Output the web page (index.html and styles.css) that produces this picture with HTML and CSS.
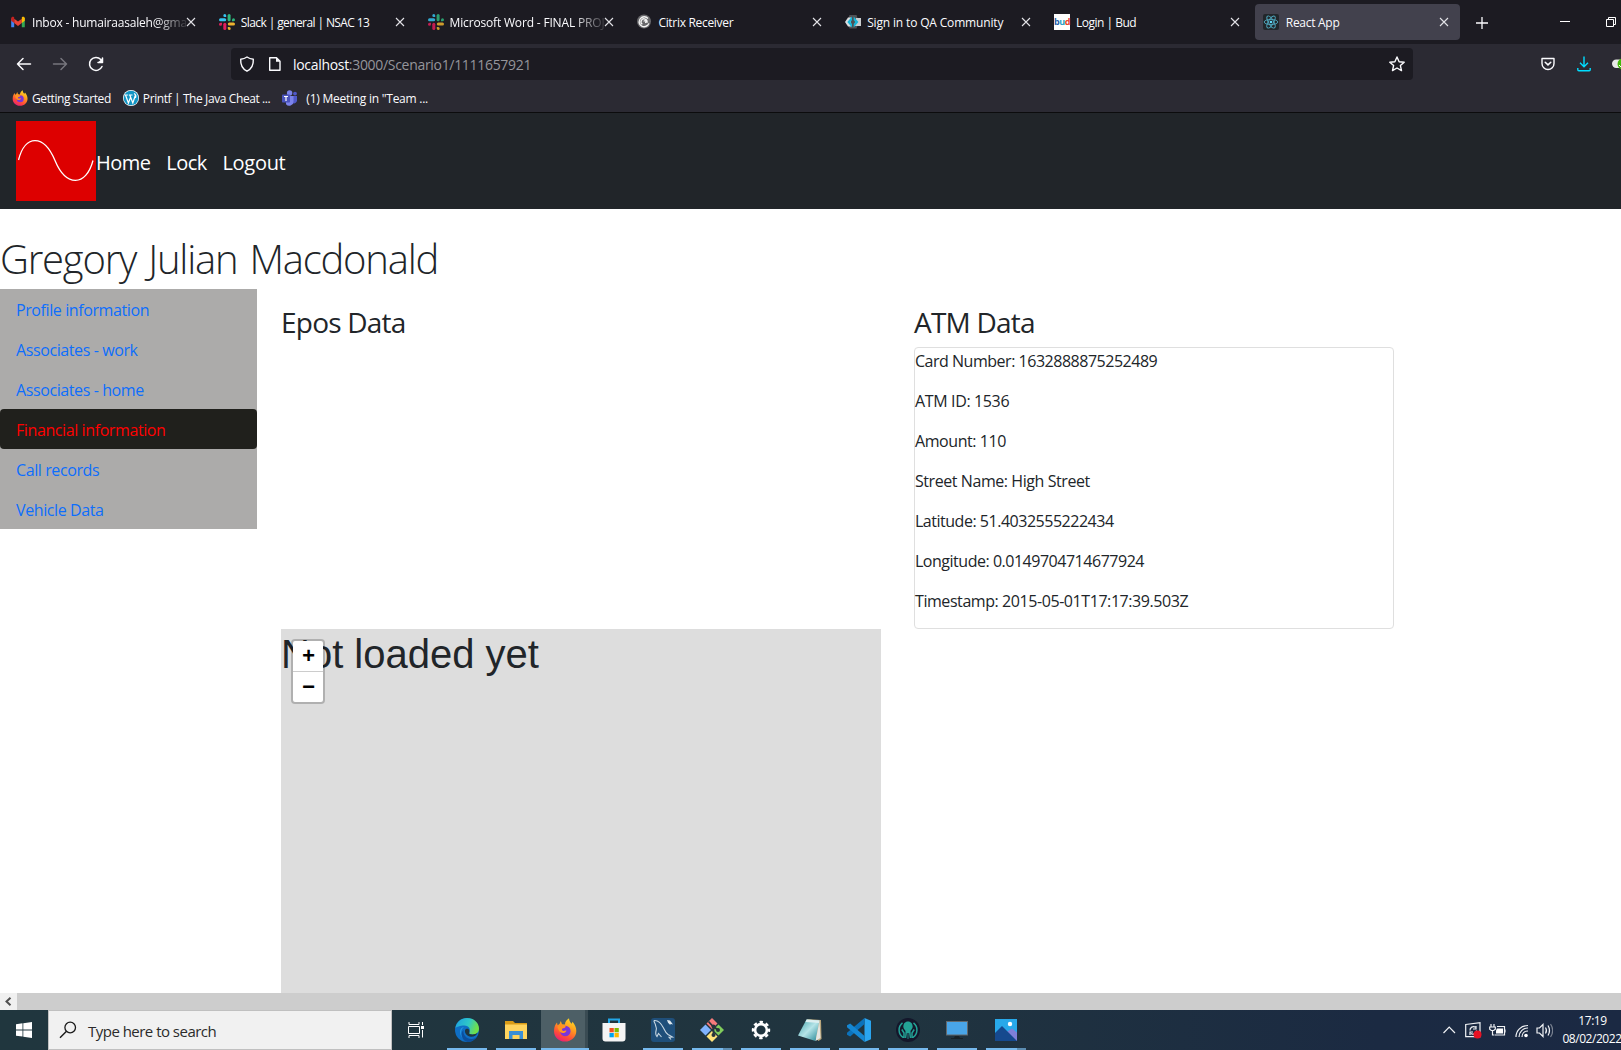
FILE: index.html
```html
<!DOCTYPE html>
<html lang="en">
<head>
<meta charset="utf-8">
<title>React App</title>
<link rel="stylesheet" href="styles.css">
</head>
<body>
<svg class="defs" width="0" height="0" aria-hidden="true">
  <defs>
    <linearGradient id="ffBody" x1="0.8" y1="0" x2="0.3" y2="1"><stop offset="0" stop-color="#ffe226"/><stop offset="0.4" stop-color="#ff9a1f"/><stop offset="0.75" stop-color="#ff4a3a"/><stop offset="1" stop-color="#e81e78"/></linearGradient>
    <linearGradient id="edgeTop" x1="0" y1="0" x2="1" y2="0.3"><stop offset="0" stop-color="#1c9fe0"/><stop offset="0.6" stop-color="#2fc8c8"/><stop offset="1" stop-color="#6fe04a"/></linearGradient>
    <linearGradient id="paper" x1="0" y1="0" x2="1" y2="1"><stop offset="0" stop-color="#3d9fa8"/><stop offset="0.5" stop-color="#b5e4e8"/><stop offset="1" stop-color="#1f8392"/></linearGradient>
    <symbol id="close" viewBox="0 0 10 10"><path d="M1 1l8 8M9 1l-8 8" stroke="#e3e3e8" stroke-width="1.1" fill="none"/></symbol>
    <symbol id="slack" viewBox="0 0 16 16">
      <g fill="#36c5f0"><rect x="0" y="4.3" width="7.2" height="3" rx="1.5"/><path d="M5.8 0a1.5 1.5 0 0 1 1.4 1.5V3H5.8a1.5 1.5 0 0 1 0-3z"/></g>
      <g fill="#2eb67d"><rect x="8.6" y="0" width="3" height="7.2" rx="1.5"/><path d="M16 5.8a1.5 1.5 0 0 1-1.5 1.5H13V5.8a1.5 1.5 0 0 1 3 0z"/></g>
      <g fill="#ecb22e"><rect x="8.8" y="8.6" width="7.2" height="3" rx="1.5"/><path d="M10.2 16a1.5 1.5 0 0 1-1.4-1.5V13h1.4a1.5 1.5 0 0 1 0 3z"/></g>
      <g fill="#e01e5a"><rect x="4.3" y="8.8" width="3" height="7.2" rx="1.5"/><path d="M0 10.2a1.5 1.5 0 0 1 1.5-1.5H3v1.5a1.5 1.5 0 0 1-3 0z"/></g>
    </symbol>
    <symbol id="firefox" viewBox="0 0 24 24">
      <path d="M12 23.6C5.600 23.600 1 18.900 1 13c0-3.700 1.500-7 3-8.400l.6 2.700 1.900-1.300 1.300-3 1.200 3.300 2.900.3C12 3.800 13.900 1.600 16 .3c.2 2.800 1.300 4 2.700 5.500l.8-2.100C22 6.500 23.300 9.700 23.300 13c0 6-4.900 10.600-11.300 10.600z" fill="url(#ffBody)"/>
      <circle cx="12.300" cy="13" r="5.300" fill="#7a35d8"/>
      <path d="M4.500 9c1.200-1.800 3.200-2.500 5.500-2l3 1.500c-.7 1.400-2.300 1.800-3.600 1.900-.8.700-.4 2.300.9 2.500 1 .2 1.900-.7 3.200-.2-.7 1.600-2 2.300-3.700 2.300-2.500-.1-4.700-2.700-5.300-6z" fill="#ff9322"/>
    </symbol>
  </defs>
</svg>

<header class="browser">
  <div class="tabstrip">
    <div class="tab">
      <svg class="fav" viewBox="0 0 16 16"><path d="M1.200 13.300V4.500l3 2.300v6.500z" fill="#4285f4"/><path d="M11.800 13.300V6.800l3-2.300v8.800z" fill="#34a853"/><path d="M4.200 9V4.700L8 7.600l3.800-2.900V9L8 11.900z" fill="#ea4335"/><path d="M1.200 6.800V4.300c0-1.500 1.700-2 2.700-1.200l.3.300V9z" fill="#c5221f"/><path d="M14.800 6.800V4.300c0-1.500-1.700-2-2.700-1.200l-.3.300V9z" fill="#fbbc04"/></svg>
      <span class="tab-title fade t0">Inbox - humairaasaleh@gmail.com</span><svg class="x"><use href="#close"/></svg>
    </div>
    <div class="tab"><svg class="fav"><use href="#slack"/></svg><span class="tab-title t1">Slack | general | NSAC 13</span><svg class="x"><use href="#close"/></svg></div>
    <div class="tab"><svg class="fav dim"><use href="#slack"/></svg><span class="tab-title fade t2">Microsoft Word - FINAL PROJECT</span><svg class="x"><use href="#close"/></svg></div>
    <div class="tab">
      <svg class="fav" viewBox="0 0 16 16"><circle cx="8" cy="7.500" r="7" fill="#68686b"/><path d="M8 7.600a1 1 0 1 1 1 1M6.300 10.300a3 3 0 1 1 4.600-1.600M12.900 9.400A5 5 0 1 1 12 4.500M3 7.500a5 5 0 0 0 8 4" fill="none" stroke="#f5f5f5" stroke-width="1.300"/></svg>
      <span class="tab-title t3">Citrix Receiver</span><svg class="x"><use href="#close"/></svg>
    </div>
    <div class="tab">
      <svg class="fav" viewBox="0 0 16 16"><path d="M4.500 1h7L14 8l-2.500 6.500h-7L2 8z" fill="#505054"/><path d="M0 8l3-4.500h3v9H3z" fill="#d9dde0"/><path d="M16 4h-5l-1 8h6z" fill="#c9cdd0"/><path d="M7 2.500L2.300 8 7 13.500V10L5.500 8 7 6zM8.700 2.500L13.400 8l-4.700 5.500V10l1.500-2-1.500-2z" fill="#17b5d8"/></svg>
      <span class="tab-title t4">Sign in to QA Community</span><svg class="x"><use href="#close"/></svg>
    </div>
    <div class="tab"><span class="fav bud"><i class="b">b</i><i class="u">u</i><i class="d">d</i></span><span class="tab-title t5">Login | Bud</span><svg class="x"><use href="#close"/></svg></div>
    <div class="tab active">
      <svg class="fav" viewBox="0 0 16 16"><rect width="16" height="16" rx="2" fill="#22272b"/><g fill="none" stroke="#4fa9c0" stroke-width=".9"><ellipse cx="8" cy="8" rx="6.800" ry="2.600"/><ellipse cx="8" cy="8" rx="6.800" ry="2.600" transform="rotate(60 8 8)"/><ellipse cx="8" cy="8" rx="6.800" ry="2.600" transform="rotate(120 8 8)"/></g><circle cx="8" cy="8" r="1.300" fill="#61dafb"/></svg>
      <span class="tab-title t6">React App</span><svg class="x"><use href="#close"/></svg>
    </div>
    <svg class="newtab" viewBox="0 0 12 12"><path d="M6 0v12M0 6h12" stroke="#fbfbfe" stroke-width="1.300"/></svg>
    <svg class="winctl" viewBox="0 0 58 16"><path d="M0 7.500h10" stroke="#fff"/><path d="M46.500 5.500h7v7h-7zM48.500 5.500v-2h7v7h-2" fill="none" stroke="#fff"/></svg>
  </div>

  <div class="toolbar">
    <svg class="nav-icons" viewBox="0 0 90 18" fill="none" stroke-width="1.500" stroke-linecap="round" stroke-linejoin="round"><path d="M14.500 9H1.500M7 3.500L1.500 9 7 14.500" stroke="#fbfbfe"/><path d="M37.500 9h13M45 3.500L50.500 9 45 14.500" stroke="#77767e"/><path d="M86 11.500a6.500 6.500 0 1 1-1.200-7" stroke="#fbfbfe"/><path d="M86.500 3v4.500H82" stroke="#fbfbfe"/><path d="M86.500 3v4.500H82z" fill="#fbfbfe" stroke="none"/></svg>
    <div class="urlbar">
      <svg class="shield" viewBox="0 0 16 16"><path d="M8 1c2 1.400 4 2 6.300 2.300C14.600 8.500 12.500 13 8 15.200 3.500 13 1.400 8.500 1.700 3.300 4 3 6 2.400 8 1z" fill="none" stroke="#fbfbfe" stroke-width="1.400" stroke-linejoin="round"/></svg>
      <svg class="page" viewBox="0 0 14 16"><path d="M2.500 1.700h6L12 5.200v9.100H1.700V1.700z" fill="none" stroke="#fbfbfe" stroke-width="1.400" stroke-linejoin="round"/><path d="M8 1.500v4.200h4.200z" fill="#fbfbfe"/></svg>
      <span class="url"><b>localhost</b>:3000/Scenario1/1111657921</span>
      <svg class="star" viewBox="0 0 16 16"><path d="M8 1l2.100 4.700 5.100.5-3.800 3.400 1.100 5L8 12l-4.500 2.600 1.100-5L.8 6.200l5.100-.5z" fill="none" stroke="#fbfbfe" stroke-width="1.400" stroke-linejoin="round"/></svg>
    </div>
    <div class="tools">
      <svg class="pocket" viewBox="0 0 14 14"><path d="M1 1.500h12v5a6 6 0 0 1-12 0z" fill="none" stroke="#fbfbfe" stroke-width="1.400" stroke-linejoin="round"/><path d="M4.200 5.200L7 7.900l2.800-2.700" fill="none" stroke="#fbfbfe" stroke-width="1.500" stroke-linecap="round"/></svg>
      <svg class="download" viewBox="0 0 14 16"><path d="M7 .5v10M3 6.800l4 4 4-4M.8 12v1.800c0 .6.400 1 1 1h10.400c.6 0 1-.4 1-1V12" fill="none" stroke="#00ddff" stroke-width="1.400"/></svg>
      <svg class="ext" viewBox="0 0 9 12"><rect x="0" y="1.500" width="16" height="8.500" rx="4.200" fill="#e8e8e8"/><circle cx="11" cy="6" r="5.500" fill="#43b80b"/><path d="M7 7l2 2" stroke="#fff"/></svg>
    </div>
  </div>

  <div class="bookmarks">
    <svg class="fav" viewBox="0 0 24 24"><use href="#firefox"/></svg><span class="bm b0">Getting Started</span>
    <svg class="fav" viewBox="0 0 16 16"><circle cx="8" cy="8" r="8" fill="#fff"/><circle cx="8" cy="8" r="7.300" fill="#1295c4"/><path d="M2.500 5l2.900 8L7.700 7M6.800 5l3 8 2.500-7.500M1.700 5h3.200M5.800 5h3.700M11 3.500c1.800 1 2.300 2.500 1.400 4.500" fill="none" stroke="#fff" stroke-width="1.200"/></svg><span class="bm b1">Printf | The Java Cheat ...</span>
    <svg class="fav" viewBox="0 0 16 16"><circle cx="7.600" cy="3" r="2.700" fill="#7b83eb"/><circle cx="13" cy="3.600" r="1.900" fill="#5059c9"/><path d="M10 6h5v4.500a3 3 0 0 1-4 2.700z" fill="#5059c9"/><path d="M4 6h7.500v5.500a4.200 4.200 0 0 1-7.500 2.700z" fill="#7b83eb"/><rect y="4.500" width="8" height="8" rx=".8" fill="#4a53bc"/><path d="M2 6.500h4M4 6.500v4.500" stroke="#fff" stroke-width="1.200"/></svg><span class="bm b2">(1) Meeting in "Team ...</span>
  </div>
</header>

<nav class="navbar">
  <svg class="logo" viewBox="0 0 80 80"><rect width="80" height="80" fill="#dd0000"/><path d="M2.500 39C9 13 28 13 39 39.500S70 66 77 39.500" fill="none" stroke="#fff" stroke-width="1.300"/></svg>
  <a>Home</a><a>Lock</a><a>Logout</a>
</nav>

<main class="page-body">
  <h1 class="person">Gregory Julian Macdonald</h1>
  <div class="columns">
    <ul class="sidebar">
      <li>Profile information</li>
      <li>Associates - work</li>
      <li>Associates - home</li>
      <li class="selected">Financial information</li>
      <li>Call records</li>
      <li>Vehicle Data</li>
    </ul>
    <section class="epos">
      <h3>Epos Data</h3>
      <div class="map">
        <div class="notice">Not loaded yet</div>
        <div class="zoom"><a>+</a><a>−</a></div>
      </div>
    </section>
    <section class="atm">
      <h3>ATM Data</h3>
      <div class="card">
        <p class="tight">Card Number: 1632888875252489</p>
        <p class="loose">ATM ID: 1536</p>
        <p>Amount: 110</p>
        <p>Street Name: High Street</p>
        <p class="tight">Latitude: 51.4032555222434</p>
        <p class="tight">Longitude: 0.0149704714677924</p>
        <p>Timestamp: 2015-05-01T17:17:39.503Z</p>
      </div>
    </section>
  </div>
</main>

<div class="scrollbar"><span class="arrow"><svg viewBox="0 0 8 9"><path d="M6.500.8L2.500 4.500l4 3.700" fill="none" stroke="#505050" stroke-width="2"/></svg></span></div>

<footer class="taskbar">
  <div class="start"><svg viewBox="0 0 16 16" fill="#fff"><path d="M0 2.200L6.500 1.300v6.200H0zM7.300 1.200L16 0v7.500H7.300zM0 8.400h6.500v6.200L0 13.700zM7.300 8.400H16V16l-8.700-1.200z"/></svg></div>
  <div class="search"><svg viewBox="0 0 18 18"><circle cx="11.200" cy="6.500" r="5.300" fill="none" stroke="#1a1a1a" stroke-width="1.300"/><path d="M7.500 10.300L1 16.800" stroke="#1a1a1a" stroke-width="1.400"/></svg><span>Type here to search</span></div>
  <div class="taskview"><svg viewBox="0 0 17 16" fill="none" stroke="#fff"><path d="M1 0v2.500h10V0M1 16v-2.500h10V16M.5 4.500h11v7H.5zM14.500 0v3M14.500 8v7.500" /><rect x="13" y="4" width="3" height="3" fill="#fff" stroke="none"/></svg></div>
  <div class="apps">
    <div class="app"><svg viewBox="0 0 24 24"><circle cx="12" cy="12" r="12" fill="#0f6fc5"/><path d="M.4 10C1.300 4 6 0 12 0c7 0 12 5 12 10.500 0 4-3 6-6.500 6-2.500 0-3.800-.8-3.200-1.700 1.700-2.800 0-7.300-5-7.300C5 7.500 1.500 9 .4 10z" fill="url(#edgeTop)"/><path d="M8.500 12c-1 5 3.500 9.500 8.500 9 2.500-.3 4.300-1.400 5.300-2.500C20 22 16.500 24 12.500 24 7 23 5 15 8.500 12z" fill="#0c4f9c"/><path d="M9 9c-3 2-4 7-1.500 11C4 16 4 9.500 9 9z" fill="#2494e0"/><path d="M14.300 14.800c-.6 1 .8 1.800 3.200 1.700 2 0 3.700-.6 5-1.700-1 2.500-3.500 4.200-6.500 4-4-.3-6.500-3.500-6-6.500 1-2 4-2 4.300.5z" fill="#20363f"/></svg></div>
    <div class="app"><svg viewBox="0 0 24 24"><path d="M1 3h8l2 2h12v16H1z" fill="#d99b16"/><path d="M1 6.500h22V21H1z" fill="#ffd45e"/><path d="M5 13h14v8h-3.500v-4h-7v4H5z" fill="#3a8fd6"/></svg></div>
    <div class="app current"><svg viewBox="0 0 24 24"><use href="#firefox"/></svg></div>
    <div class="app idle"><svg viewBox="0 0 24 24"><path d="M7 6V1.500h10V6" fill="none" stroke="#22a7e8" stroke-width="2"/><path d="M.5 5h23v15.500a3 3 0 0 1-3 3h-17a3 3 0 0 1-3-3z" fill="#f5f5f5"/><path d="M7.500 10h4.300v4.300H7.500z" fill="#f25022"/><path d="M12.500 10h4.300v4.300h-4.300z" fill="#7fba00"/><path d="M7.500 15h4.300v4.300H7.500z" fill="#00a4ef"/><path d="M12.500 15h4.300v4.300h-4.300z" fill="#ffb900"/></svg></div>
    <div class="app"><svg viewBox="0 0 24 24"><rect width="24" height="24" rx="3" fill="#1f4f7a"/><path d="M3 2.500c4-.5 7 2.500 9.500 7.500 1.200 2.500 2.200 5 4.500 6.500l4.500 2.500-3.500.2 2 2.300M3 2.500c-.3 1.500 1.300 2.500 1.500 4.500.2 2 1.500 3 .7 5-.7 2.500-.7 5 .8 6.500l1.500-3 3 3.500" fill="none" stroke="#c9d8e2" stroke-width="1.100"/><path d="M16 2l3 .5 3 4-2-.5-1 .8-2-2z" fill="#dfe9ef"/></svg></div>
    <div class="app multi"><svg viewBox="0 0 24 24"><path d="M12 0l5.500 5.500L12 11 6.500 5.500z" fill="#f67b7b"/><path d="M18.500 6.500L24 12l-5.500 5.500L13 12z" fill="#80cc5c"/><path d="M5.500 6.500L11 12l-5.500 5.500L0 12z" fill="#80b3ff"/><path d="M12 13l5.500 5.500L12 24l-5.500-5.500z" fill="#ffe27a"/><path d="M8.500 3.500l5 5.500v8M14 9l4 3" fill="none" stroke="#26343c" stroke-width="1.800"/><g fill="#26343c"><circle cx="13.500" cy="8.500" r="2"/><circle cx="18" cy="12" r="2"/><circle cx="13.500" cy="17" r="2"/></g></svg></div>
    <div class="app"><svg viewBox="0 0 24 24"><circle cx="12" cy="12" r="5.900" fill="none" stroke="#fff" stroke-width="2.600"/><circle cx="12" cy="12" r="8" fill="none" stroke="#fff" stroke-width="2.400" stroke-dasharray="3.400 2.883" stroke-dashoffset="1.700"/></svg></div>
    <div class="app"><svg viewBox="0 0 24 24"><path d="M9 1l14 1 .5 19-3 2-9-9z" fill="#b9a67c"/><path d="M8.500 1.500l13 1L17.500 23 0 17.500z" fill="url(#paper)"/><path d="M21.500 3L17.500 23l5-3z" fill="#e6e6e2"/><path d="M8.500 1.500l13 1-.5 2.500-13.500-1z" fill="#dceef0"/></svg></div>
    <div class="app"><svg viewBox="0 0 24 24"><path d="M17.500 0L24 2.800v18.400L17.500 24z" fill="#2aa5f0"/><path d="M17.500 0v6L3.200 18.500 0 16.800v-2z" fill="#0b72bb"/><path d="M17.500 24v-6L3.200 5.500 0 7.200v2z" fill="#1587d3"/></svg></div>
    <div class="app"><svg viewBox="0 0 24 24"><circle cx="12" cy="12" r="12" fill="#14172b"/><path d="M12 3.500c-3 0-4.700 2.300-4.700 5.200 0 2 1.700 3 2.200 4.300l-.5 7h1.200l.7-5h.7v6h.8v-6h.7l.7 5H15l-.5-7c.5-1.300 2.200-2.300 2.200-4.300 0-2.900-1.700-5.200-4.700-5.200z" fill="#23a296"/><path d="M6.500 4.800a9 9 0 0 0 .5 14.500M17.500 4.800a9 9 0 0 1-.5 14.500M5.800 11.500L8 15v5M18.200 11.500L16 15v5" fill="none" stroke="#23a296" stroke-width="1.500"/></svg></div>
    <div class="app"><svg viewBox="0 0 24 24"><path d="M1 3h22v14.500H1z" fill="#63696d"/><path d="M2 4h20v12.500H2z" fill="#49a5e8"/><path d="M10 18h4l1 2h3v1H6v-1h3z" fill="#172127"/></svg></div>
    <div class="app multi"><svg viewBox="0 0 24 24"><path d="M1 1h22v22H1z" fill="#28a9ea"/><path d="M11 15l7-4.500 5 4V23H11z" fill="#7f7fd8"/><path d="M1 15l7-7 15 15H1z" fill="#16498e"/><circle cx="16" cy="6" r="2.200" fill="#fff"/></svg></div>
  </div>
  <div class="tray">
    <svg class="tray-icons" viewBox="0 0 110 20" fill="none" stroke="#f0f2f5" stroke-width="1.200"><path d="M.5 13L6.200 7.200 12 13"/><path d="M22.700 4.500L37 2.700v14H22.700z"/><path d="M27 10.500a3.500 3.500 0 0 1 5.500-3.200M33 6v3h-3M33.500 10.500A3.500 3.500 0 0 1 28 13.500M27 15v-3h3"/><circle cx="34.500" cy="14.500" r="4" fill="#e81123" stroke="none"/><path d="M48 4v3M51 4v3M46.700 7h5.600v2.200l-1.600 1.300H48.300l-1.600-1.300zM49.500 10.500v4.500h2"/><path d="M54 6.500h7.500v8.500H52M62 9.500v3" /><path d="M54 8.500h6v5h-7v-3z" fill="#fff" stroke="none"/><path d="M73 17C73 10.500 78 5.500 85 5.500M76 17c0-5 4-9 9-9M79 17c0-3.500 2.500-6 6-6"/><circle cx="83" cy="15.500" r="1.800" fill="#fff" stroke="none"/><path d="M94 8h2.500L100 4.500v12L96.500 13H94zM102.500 7.500c1.300 2 1.300 4 0 6"/><path d="M105 5.500c2 3.300 2 6.700 0 10" /><path d="M107.500 4c2.700 4 2.700 9 0 13" stroke="#7a8290"/></svg>
    <div class="clock"><span class="time">17:19</span><span class="date">08/02/2022</span></div>
  </div>
</footer>
</body>
</html>
```

FILE: styles.css
```css
* { box-sizing: border-box; }
html, body { margin: 0; height: 100%; overflow: hidden; }
body {
  display: flex; flex-direction: column;
  width: 1621px; height: 1050px;
  background: #fff; color: #212529;
  font: 16px/24px "Open Sans", "Noto Sans", sans-serif;
}
svg { display: block; flex: none; }
.defs { position: absolute; }
h1, h3, p, ul { margin: 0; padding: 0; font-weight: 400; }

/* browser chrome */
.browser { flex: none; height: 113px; background: #2b2a33; border-bottom: 1px solid #0c0c0d; color: #fbfbfe; font-size: 12px; }
.tabstrip { display: flex; height: 44px; padding: 4px 0 4px 2px; background: #1c1b22; gap: 3.800px; }
.tab { display: flex; align-items: center; flex: none; width: 205px; height: 36px; padding: 0 11px 0 8px; border-radius: 4px; }
.tab.active { background: #42414d; }
.fav { width: 16px; height: 16px; }
.dim { opacity: .85; }
.tab-title { flex: 1; min-width: 0; margin-left: 6px; overflow: hidden; white-space: nowrap; line-height: 20px; padding-top: 2px; }
.t0 { letter-spacing: -.2px; }
.t1 { letter-spacing: -.6px; }
.t2 { letter-spacing: -.17px; }
.t3 { letter-spacing: -.31px; }
.t4 { letter-spacing: -.16px; }
.t5 { letter-spacing: -.5px; }
.t6 { letter-spacing: -.28px; padding-left: 1px; }
.fade { -webkit-mask-image: linear-gradient(to right, #000 80%, transparent 103%); mask-image: linear-gradient(to right, #000 80%, transparent 103%); }
.x { width: 10px; height: 10px; }
.bud { display: flex; justify-content: center; background: #fff; font: 700 9px/15px "Open Sans", sans-serif; letter-spacing: -.5px; flex: none; }
.bud i { font-style: normal; }
.bud .b { color: #2460a8; }
.bud .u { color: #2a9fc9; }
.bud .d { color: #e8412c; }
.newtab { width: 12px; height: 12px; margin: 13px 0 0 12px; }
.winctl { width: 58px; height: 16px; margin: 10px 0 0 68.500px; }

.toolbar { display: flex; height: 36px; padding: 4px 0 0; align-items: center; }
.nav-icons { width: 90px; height: 18px; margin-left: 16px; }
.urlbar { display: flex; align-items: center; width: 1182px; height: 32px; margin-left: 125px; padding: 0 8px; border-radius: 4px; background: #1c1b22; }
.shield { width: 16px; height: 16px; }
.page { width: 14px; height: 16px; margin-left: 13px; }
.url { flex: 1; margin-left: 11px; padding-top: 2px; color: #95959b; font-size: 14px; letter-spacing: -.31px; }
.url b { font-weight: 400; color: #fbfbfe; }
.star { width: 16px; height: 16px; }
.tools { display: flex; align-items: center; margin-left: 128px; }
.pocket { width: 14px; height: 14px; }
.download { width: 14px; height: 16px; margin-left: 22px; }
.ext { width: 9px; height: 12px; margin-left: 21px; }

.bookmarks { display: flex; align-items: center; height: 32px; padding: 4px 0 0 12px; }
.bm { margin: 0 12px 0 4px; padding-top: 2px; white-space: nowrap; letter-spacing: -.4px; }
.b2 { margin-left: 8px; letter-spacing: -.25px; }

/* application */
.navbar { display: flex; align-items: center; flex: none; height: 96px; padding: 8px 16px; background: #212529; color: #fff; font-size: 20px; line-height: 30px; }
.logo { width: 80px; height: 80px; }
.navbar a { margin-right: 15.700px; padding-top: 4px; letter-spacing: -.5px; }
.navbar a:last-child { letter-spacing: -.3px; }

.page-body { flex: 1; min-height: 0; overflow: hidden; }
.person { height: 80px; padding-top: 26px; font-size: 40px; line-height: 48px; font-weight: 300; white-space: nowrap; letter-spacing: -1.200px; word-spacing: 2.800px; }
.columns { display: grid; grid-template-columns: 257px 600px 536px; }
.sidebar { align-self: start; list-style: none; background: #acabaa; color: #0d6efd; }
.sidebar li { height: 40px; padding: 9px 16px 0; letter-spacing: -.4px; }
.sidebar .selected { background: #20201c; color: #f00; border-radius: 4px; }
.epos { margin-left: 24px; width: 600px; }
.atm { margin-left: 57px; width: 480px; }
h3 { height: 58px; padding-top: 14px; font-size: 28px; line-height: 38px; white-space: nowrap; letter-spacing: -.78px; }
.map { position: relative; height: 380px; margin-top: 282px; padding-top: 1px; background: #ddd; }
.notice { font: 40px/48px "Liberation Sans", Arial, sans-serif; }
.zoom { position: absolute; left: 10px; top: 10px; width: 34px; border: 2px solid rgba(0, 0, 0, .2); border-radius: 4px; background: #fff; background-clip: padding-box; color: #000; }
.zoom a { display: block; height: 30px; font: 700 22px/34px "Liberation Mono", "Lucida Console", monospace; text-align: center; text-indent: 1px; }
.zoom a + a { height: 31px; border-top: 1px solid #ccc; }
.card { height: 282px; border: 1px solid #dfdfdf; border-radius: 4px; }
.card p { height: 40px; padding-top: 1px; white-space: nowrap; letter-spacing: -.43px; }
.card .tight { letter-spacing: -.48px; }
.card .loose { letter-spacing: -.36px; }

.scrollbar { display: flex; flex: none; height: 17px; background: #cdcdcd; }
.arrow { display: grid; place-items: center; width: 17px; padding-right: 2px; background: #f0f0f0; }
.arrow svg { width: 8px; height: 9px; }

/* desktop taskbar */
.taskbar { display: flex; flex: none; height: 40px; background: linear-gradient(to right, #20363e, #20343f 55%, #1b2a42 85%, #1b2943); }
.start { display: grid; place-items: center; width: 48px; }
.start svg { width: 16px; height: 16px; }
.search { display: flex; align-items: center; width: 344px; padding-left: 10px; border: 1px solid #c0c0c0; background: #f1f1f1; color: #2b2b2b; font-size: 15px; letter-spacing: -.52px; }
.search svg { width: 18px; height: 18px; margin-right: 11px; }
.search span { padding-top: 2px; }
.taskview { display: grid; place-items: center; width: 49px; }
.taskview svg { width: 17px; height: 16px; }
.apps { display: flex; }
.app { display: grid; place-items: center; position: relative; width: 49px; height: 40px; padding-left: 2px; }
.app svg { width: 24px; height: 24px; }
.app::after { content: ""; position: absolute; left: 6px; right: 3px; bottom: 0; height: 2px; background: #76b9ed; }
.app.idle::after { display: none; }
.app.current { background: linear-gradient(to right, transparent 2px, #4d5f66 2px, #4d5f66 46px, #394b53 46px); }
.app.current::after { left: 2px; right: -1px; }
.app.multi::after { background: linear-gradient(to right, #76b9ed 31px, #5c8db1 31px); right: 3px; }
.tray { display: flex; margin-left: auto; width: 178px; }
.tray-icons { width: 110px; height: 20px; margin-top: 10px; }
.clock { display: flex; flex-direction: column; width: 68px; padding-top: 2px; align-items: center; color: #fff; font-size: 12px; line-height: 18px; }
.clock span { white-space: nowrap; letter-spacing: -.45px; }
.time { margin-left: 11px; }
.date { margin-left: 10px; }
```
